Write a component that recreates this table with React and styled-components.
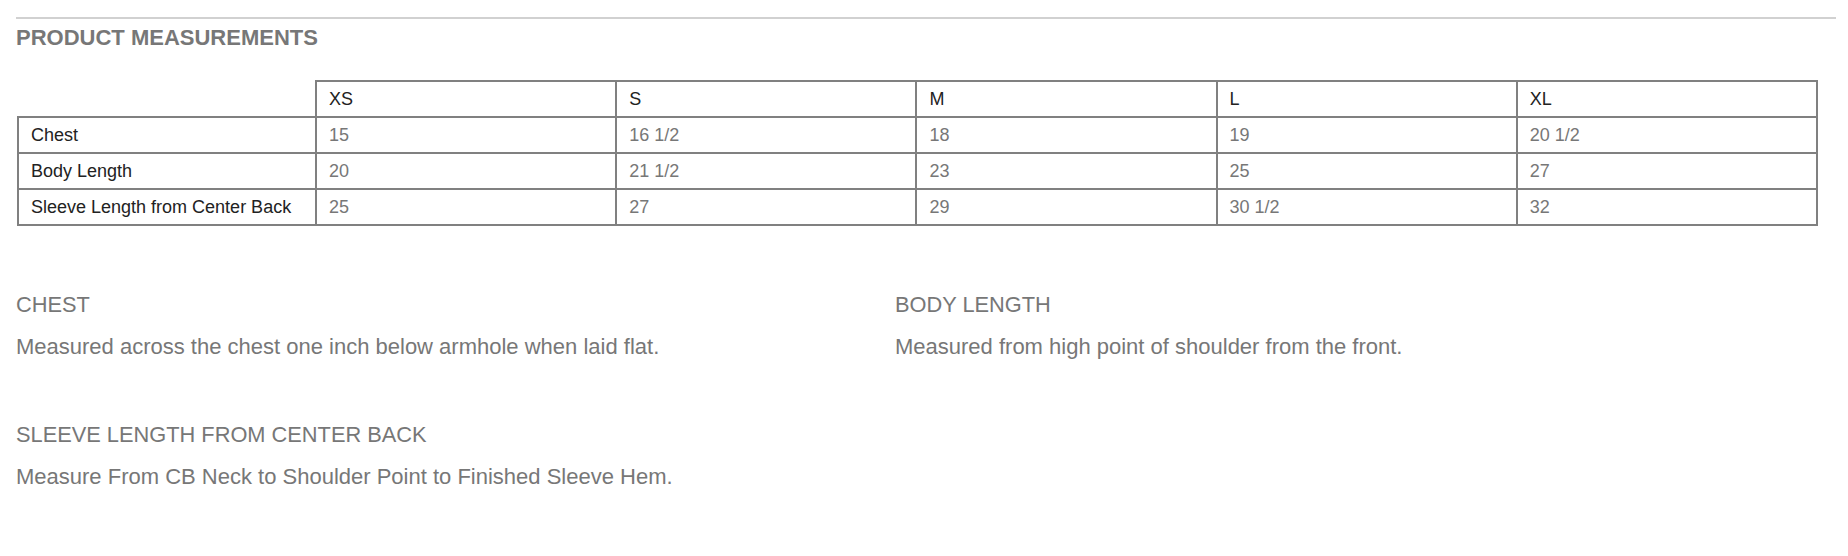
import React from 'react';
import styled, { createGlobalStyle } from 'styled-components';

const GlobalStyle = createGlobalStyle`
    body {
        margin: 0;
        background: #fff;
        font-family: "Liberation Sans", Arial, Helvetica, sans-serif;
    }
`;

const Page = styled.div`
    padding: 17px 12px 0 16px;
`;

const Rule = styled.div`
    height: 2px;
    background: #d1d1d1;
`;

const Title = styled.h2`
    margin: 6px 0 0 0;
    font-size: 22px;
    line-height: 26px;
    font-weight: 700;
    color: #777;
`;

const SizeTable = styled.table`
    margin: 29px 0 0 1px;
    width: 1801px;
    table-layout: fixed;
    border-collapse: collapse;
    font-size: 18px;
    line-height: 22px;

    th, td {
        padding: 6px 12px;
        border: 2px solid #808080;
        text-align: left;
        font-weight: 400;
        white-space: nowrap;
    }

    th {
        color: #222;
    }

    td {
        color: #777;
    }

    th.corner {
        border: none;
    }
`;

const Specs = styled.div`
    margin-top: 66px;
    display: grid;
    grid-template-columns: 879px 1fr;
    row-gap: 62px;
`;

const Spec = styled.div`
    display: flex;
    flex-direction: column;
    gap: 16px;
`;

const SpecHeading = styled.h3`
    margin: 0;
    font-size: 21.8px;
    line-height: 26px;
    font-weight: 400;
    color: #777;
`;

const SpecText = styled.p`
    margin: 0;
    font-size: 22px;
    line-height: 26px;
    color: #777;
`;

const sizes = ['XS', 'S', 'M', 'L', 'XL'];

const rows = [
    { label: 'Chest', values: ['15', '16 1/2', '18', '19', '20 1/2'] },
    { label: 'Body Length', values: ['20', '21 1/2', '23', '25', '27'] },
    { label: 'Sleeve Length from Center Back', values: ['25', '27', '29', '30 1/2', '32'] },
];

const specs = [
    { title: 'CHEST', text: 'Measured across the chest one inch below armhole when laid flat.' },
    { title: 'BODY LENGTH', text: 'Measured from high point of shoulder from the front.' },
    { title: 'SLEEVE LENGTH FROM CENTER BACK', text: 'Measure From CB Neck to Shoulder Point to Finished Sleeve Hem.' },
];

export default function App() {
  return (
    <Page>
        <GlobalStyle />
        <Rule />
        <Title>PRODUCT MEASUREMENTS</Title>
        <SizeTable>
            <colgroup>
                <col style={{ width: 298 }} />
                {sizes.map(s => <col key={s} />)}
            </colgroup>
            <thead>
            <tr>
                <th className="corner"></th>
                {sizes.map(s => <th key={s}>{s}</th>)}
            </tr>
            </thead>
            <tbody>
            {rows.map(row => (
                <tr key={row.label}>
                    <th>{row.label}</th>
                    {row.values.map((v, i) => <td key={i}>{v}</td>)}
                </tr>
            ))}
            </tbody>
        </SizeTable>
        <Specs>
            {specs.map(spec => (
                <Spec key={spec.title}>
                    <SpecHeading>{spec.title}</SpecHeading>
                    <SpecText>{spec.text}</SpecText>
                </Spec>
            ))}
        </Specs>
    </Page>
  )
}
